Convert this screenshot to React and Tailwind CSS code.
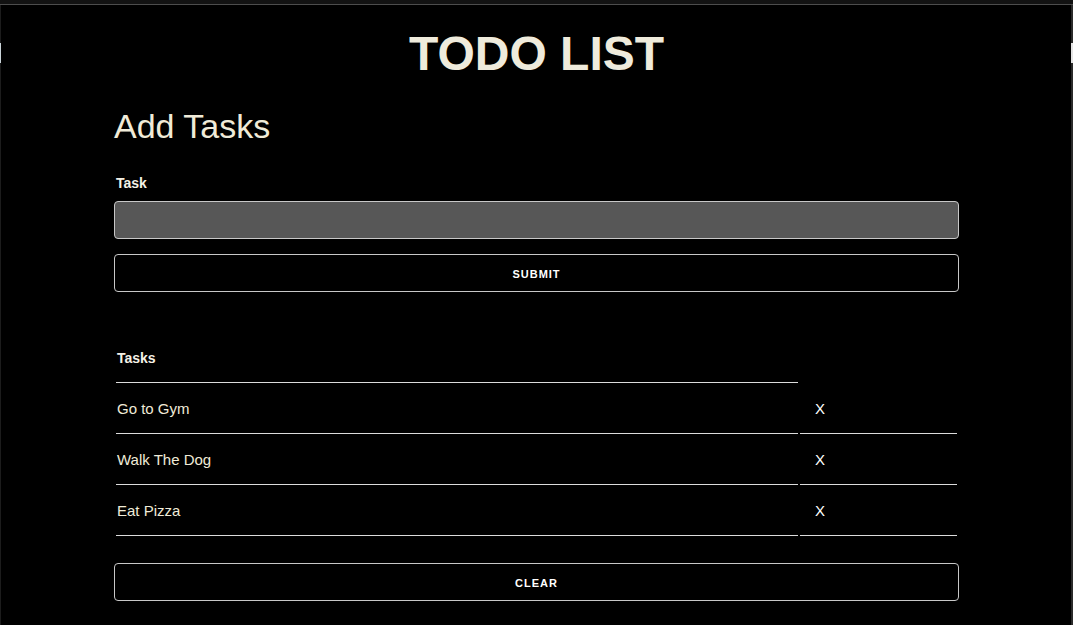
import { useState } from 'react';

const initialTasks = ['Go to Gym', 'Walk The Dog', 'Eat Pizza'];

export default function App() {
  const [tasks, setTasks] = useState(initialTasks);
  const [task, setTask] = useState('');

  const addTask = (e) => {
    e.preventDefault();
    if (!task.trim()) return;
    setTasks([...tasks, task.trim()]);
    setTask('');
  };

  const removeTask = (index) => {
    setTasks(tasks.filter((_, i) => i !== index));
  };

  return (
    <div
      className="relative min-h-[625px] bg-black text-[#f0ebd8] overflow-hidden"
      style={{ fontFamily: '"Liberation Sans", Arial, sans-serif' }}
    >
      {/* window edge */}
      <div className="h-[5px] bg-[#121212] border-b border-[#4d4d4d]" />
      <div className="absolute left-0 top-[5px] bottom-0 w-px bg-[#1c1c1c]" />
      <div className="absolute left-0 top-[43px] h-[20px] w-px bg-[#c9d3d8]" />
      <div className="absolute right-0 top-[5px] bottom-0 w-[2px] bg-[#2a2a2a]" />
      <div className="absolute right-0 top-[43px] h-[20px] w-[2px] bg-[#e4e4e4]" />

      <h1 className="mt-[21px] text-center text-[48px] leading-[56px] font-bold text-[#efebdc]">
        TODO LIST
      </h1>

      <div className="w-[845px] mx-auto">
        <h2 className="mt-[24px] text-[34px] leading-[40px] text-[#f0ebd8]">Add Tasks</h2>

        <form onSubmit={addTask}>
          <label className="block mt-[27px] pl-[2px] text-[14px] leading-[20px] font-bold text-[#f5f1e6]">
            Task
          </label>
          <input
            value={task}
            onChange={(e) => setTask(e.target.value)}
            className="block mt-[8px] w-full h-[38px] px-3 rounded-[4px] border border-[#c8c8c8] bg-[#575757] text-white text-[15px] outline-none"
          />
          <button
            type="submit"
            className="block mt-[15px] w-full h-[38px] pt-[2px] rounded-[4px] border border-[#c8c8c8] bg-black text-white text-[11px] font-bold tracking-[1px]"
          >
            SUBMIT
          </button>
        </form>

        <table className="mt-[40px] w-full border-separate border-spacing-[2px] text-left">
          <thead>
            <tr>
              <th className="h-[49px] w-[682px] pl-[1px] border-b border-[#dcdcdc] text-[14px] font-bold text-[#f5f1e6]">
                Tasks
              </th>
              <th className="h-[49px]" />
            </tr>
          </thead>
          <tbody>
            {tasks.map((t, i) => (
              <tr key={i}>
                <td className="h-[49px] pl-[1px] border-b border-[#dcdcdc] text-[15px] text-[#f0ebd8]">{t}</td>
                <td className="h-[49px] pl-[15px] border-b border-[#dcdcdc]">
                  <button onClick={() => removeTask(i)} className="text-[15px] text-white">
                    X
                  </button>
                </td>
              </tr>
            ))}
          </tbody>
        </table>

        <button
          onClick={() => setTasks([])}
          className="block mt-[25px] w-full h-[38px] pt-[2px] rounded-[4px] border border-[#c8c8c8] bg-black text-white text-[11px] font-bold tracking-[1px]"
        >
          CLEAR
        </button>
      </div>
    </div>
  );
}
